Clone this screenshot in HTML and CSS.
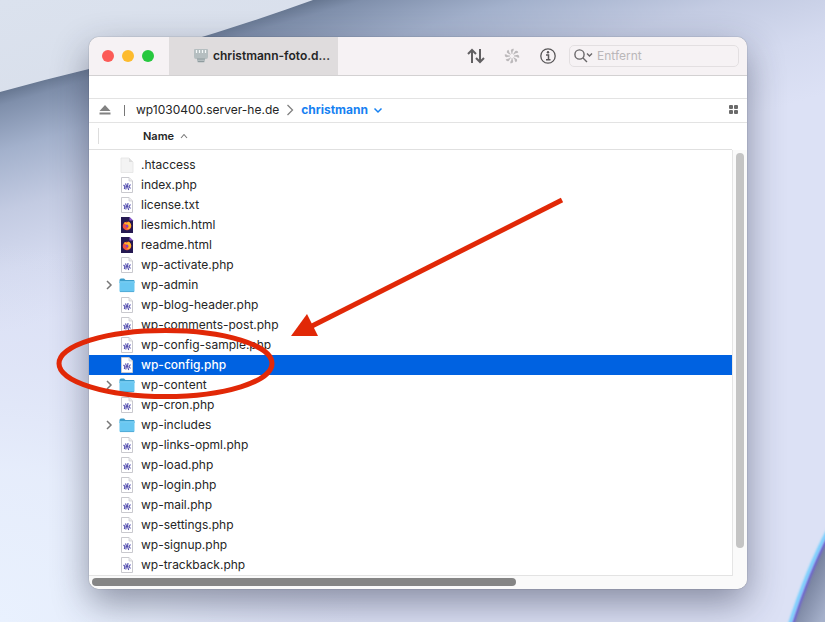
FILE: index.html
```html
<!DOCTYPE html>
<html lang="de">
<head>
<meta charset="utf-8">
<meta name="viewport" content="width=device-width, initial-scale=1">
<title>christmann-foto.de</title>
<link rel="stylesheet" href="styles.css">
</head>
<body>
<svg class="wallpaper" viewBox="0 0 825 622" preserveAspectRatio="none" aria-hidden="true">
  <defs>
    <linearGradient id="sky" gradientUnits="userSpaceOnUse" x1="100" y1="62" x2="165" y2="286">
      <stop offset="0" stop-color="#65758f"/><stop offset=".06" stop-color="#7f8fab"/><stop offset=".25" stop-color="#a3b1cc"/><stop offset=".5" stop-color="#c3cbe2"/><stop offset=".75" stop-color="#d4daef"/><stop offset="1" stop-color="#dce1f5"/>
    </linearGradient>
    <radialGradient id="floor" gradientUnits="userSpaceOnUse" cx="0" cy="622" r="380">
      <stop offset="0" stop-color="#e9f1fe"/><stop offset=".4" stop-color="#e7eefc" stop-opacity=".9"/><stop offset="1" stop-color="#dce1f5" stop-opacity="0"/>
    </radialGradient>
    <linearGradient id="sheet" x1="0" y1="0" x2="1" y2="1">
      <stop offset="0" stop-color="#dbe2ee"/><stop offset="1" stop-color="#d8deea"/>
    </linearGradient>
    <linearGradient id="fold" gradientUnits="userSpaceOnUse" x1="802" y1="590" x2="830" y2="604">
      <stop offset="0" stop-color="#75809c"/><stop offset="1" stop-color="#a5b0ca"/>
    </linearGradient>
    <filter id="soft"><feGaussianBlur stdDeviation="1"/></filter>
  </defs>
  <rect width="825" height="622" fill="url(#sky)"/>
  <rect width="825" height="622" fill="url(#floor)"/>
  <path d="M0 0H313Q205 39 89 69Q43 80 0 92Z" fill="url(#sheet)"/>
  <path d="M830 532Q809 572 792 626H830Z" fill="url(#fold)"/>
  <path d="M830 532Q809 572 792 626" fill="none" stroke="#7163d4" stroke-width="3" filter="url(#soft)"/>
  <path d="M828 530Q807 570 789 626" fill="none" stroke="#72cfff" stroke-width="3" filter="url(#soft)"/>
</svg>

<svg class="sprite" aria-hidden="true">
  <symbol id="php" viewBox="0 0 16 16">
    <path d="M2.500 .5H10L13.500 4V15.500H2.500Z" fill="#fff" stroke="#c9c9ce"/>
    <path d="M10 .5V4H13.500" fill="#eee" stroke="#c9c9ce" stroke-width=".7"/>
    <path d="M4.500 8L6 9.500L5.300 12M6.500 6.500L7.500 9L6.800 12.500M9 6L8.500 9.500L9.700 13M11.500 7.500L10 9.500L11.500 11.500" fill="none" stroke="#5550b0" stroke-width="1.100"/>
  </symbol>
  <symbol id="blank" viewBox="0 0 16 16">
    <path d="M2 1H10L14 5V15.500H2Z" fill="#f3f3f3" stroke="#e3e3e3" stroke-width=".8"/><path d="M10 1V5H14Z" fill="#ddd"/>
  </symbol>
  <symbol id="html" viewBox="0 0 16 16">
    <path d="M2 0H10.500L14 3.500V16H2Z" fill="#251951"/><path d="M10.500 0V3.500H14Z" fill="#9059d8"/>
    <circle cx="8" cy="9" r="4.300" fill="#f0503d"/><path d="M5 6.500L6 4.800L7.300 6.200L9.500 4.500Q12.800 6.500 12 10Q10.500 13 7 12Q9.700 11.500 9.500 9Z" fill="#ffb52e"/><path d="M6.500 8Q8.500 6.700 9.500 9Q9 10.700 7.300 10.300Z" fill="#8b42bd"/>
  </symbol>
  <symbol id="folder" viewBox="0 0 16 16">
    <path d="M.5 3Q.5 1.500 2 1.500H5L6.500 3H14.500Q15.500 3 15.500 4V6H.5Z" fill="#3b9cc9"/>
    <rect x=".5" y="4.500" width="15" height="10.500" rx="1" fill="#69c7f1"/><path d="M.5 4.800H15.500" stroke="#8bd8fa" stroke-width=".8"/><path d="M1 14.600H15" stroke="#4ca5cf" stroke-width=".8"/>
  </symbol>
  <symbol id="chevron" viewBox="0 0 8 10"><path d="M2 1L6 5L2 9" fill="none" stroke="#777" stroke-width="1.500"/></symbol>
</svg>

<main class="frame">
  <div class="window">
    <header class="titlebar">
      <div class="lights">
        <button class="light close" aria-label="Schließen"></button>
        <button class="light minimize" aria-label="Minimieren"></button>
        <button class="light expand" aria-label="Vergrößern"></button>
      </div>
      <button class="tab">
        <svg width="14" height="14" viewBox="0 0 14 14" aria-hidden="true"><path d="M0 1Q0 0 1 0H13Q14 0 14 1V8Q14 10 12 10H11V12Q11 13.500 9 13.500H5Q3 13.500 3 12V10H2Q0 10 0 8Z" fill="#b5bec0"/><path d="M2.500 1V4M5.500 1V4M8.500 1V4M11.500 1V4" stroke="#f4f8f8" stroke-width="1.200"/><path d="M3 10H11M4 12.500H10" stroke="#909c9f" stroke-width="1"/></svg>
        <span>christmann-foto.d...</span>
      </button>
      <div class="tools">
        <button class="tool" aria-label="Übertragungen"><svg width="18" height="16" viewBox="0 0 18 16"><path d="M5 15V2M1 6L5 2L9 6M13 1V14M9 10L13 14L17 10" fill="none" stroke="#626062" stroke-width="2"/></svg></button>
        <button class="tool" aria-label="Aktivität"><svg width="16" height="16" viewBox="0 0 16 16" fill="#bcb9bb"><g id="blade"><path d="M7.600 6L6.800 2.200Q7.500 .3 9.800 .8L9.500 2.500Q8.300 3 8.400 6Z"/><path d="M8.400 10L9.200 13.800Q8.500 15.700 6.200 15.200L6.500 13.500Q7.700 13 7.600 10Z"/></g><use href="#blade" transform="rotate(45 8 8)"/><use href="#blade" transform="rotate(90 8 8)"/><use href="#blade" transform="rotate(135 8 8)"/></svg></button>
        <button class="tool" aria-label="Information"><svg width="16" height="16" viewBox="0 0 16 16"><circle cx="8" cy="8" r="7.200" fill="none" stroke="#595759" stroke-width="1.300"/><circle cx="8" cy="4.300" r="1.200" fill="#595759"/><path d="M6 7H8.500V11.500M6 11.800H10.500" fill="none" stroke="#595759" stroke-width="1.500"/></svg></button>
      </div>
      <label class="search">
        <svg width="19" height="14" viewBox="0 0 19 14" aria-hidden="true"><circle cx="5.500" cy="5.500" r="4.600" fill="none" stroke="#686668" stroke-width="1.400"/><path d="M9 9L13 13M13 4.500L15.500 7L18 4.500" fill="none" stroke="#686668" stroke-width="1.400"/></svg>
        <input type="search" placeholder="Entfernt" aria-label="Entfernt">
      </label>
    </header>
    <div class="strip"></div>
    <nav class="path">
      <button class="plain" aria-label="Verbindung trennen"><svg width="12" height="10" viewBox="0 0 12 10"><path d="M6 0L11.500 6H.5ZM.5 7.500H11.500V9.500H.5Z" fill="#828282"/></svg></button>
      <span class="divider"></span>
      <a href="#" class="crumb">wp1030400.server-he.de</a>
      <svg class="next" width="8" height="12" viewBox="0 0 8 12" aria-hidden="true"><path d="M1.500 1L6.500 6L1.500 11" fill="none" stroke="#818181" stroke-width="1.300"/></svg>
      <a href="#" class="crumb current">christmann</a>
      <svg width="10" height="8" viewBox="0 0 10 8" aria-hidden="true"><path d="M1.500 2.500L5 6L8.500 2.500" fill="none" stroke="#1681f2" stroke-width="1.500"/></svg>
      <button class="plain grid" aria-label="Darstellung"><svg width="10" height="10" viewBox="0 0 10 10" fill="#6b6b6b"><rect width="4" height="4" rx="1"/><rect x="5" width="4" height="4" rx="1"/><rect y="5" width="4" height="4" rx="1"/><rect x="5" y="5" width="4" height="4" rx="1"/></svg></button>
    </nav>
    <div class="browser">
      <table class="files">
        <thead><tr><th scope="col"><span class="heading">Name <svg width="8" height="6" viewBox="0 0 8 6" aria-hidden="true"><path d="M1 5L4 1.500L7 5" fill="none" stroke="#777" stroke-width="1.100"/></svg></span></th></tr></thead>
        <tbody>
          <tr><td><div class="file"><svg class="icon"><use href="#blank"/></svg>.htaccess</div></td></tr>
          <tr><td><div class="file"><svg class="icon"><use href="#php"/></svg>index.php</div></td></tr>
          <tr><td><div class="file"><svg class="icon"><use href="#php"/></svg>license.txt</div></td></tr>
          <tr><td><div class="file"><svg class="icon"><use href="#html"/></svg>liesmich.html</div></td></tr>
          <tr><td><div class="file"><svg class="icon"><use href="#html"/></svg>readme.html</div></td></tr>
          <tr><td><div class="file"><svg class="icon"><use href="#php"/></svg>wp-activate.php</div></td></tr>
          <tr><td><div class="file"><button class="plain open" aria-label="wp-admin öffnen"><svg width="8" height="10"><use href="#chevron"/></svg></button><svg class="icon"><use href="#folder"/></svg>wp-admin</div></td></tr>
          <tr><td><div class="file"><svg class="icon"><use href="#php"/></svg>wp-blog-header.php</div></td></tr>
          <tr><td><div class="file"><svg class="icon"><use href="#php"/></svg>wp-comments-post.php</div></td></tr>
          <tr><td><div class="file"><svg class="icon"><use href="#php"/></svg>wp-config-sample.php</div></td></tr>
          <tr class="selected"><td><div class="file"><svg class="icon"><use href="#php"/></svg>wp-config.php</div></td></tr>
          <tr><td><div class="file"><button class="plain open" aria-label="wp-content öffnen"><svg width="8" height="10"><use href="#chevron"/></svg></button><svg class="icon"><use href="#folder"/></svg>wp-content</div></td></tr>
          <tr><td><div class="file"><svg class="icon"><use href="#php"/></svg>wp-cron.php</div></td></tr>
          <tr><td><div class="file"><button class="plain open" aria-label="wp-includes öffnen"><svg width="8" height="10"><use href="#chevron"/></svg></button><svg class="icon"><use href="#folder"/></svg>wp-includes</div></td></tr>
          <tr><td><div class="file"><svg class="icon"><use href="#php"/></svg>wp-links-opml.php</div></td></tr>
          <tr><td><div class="file"><svg class="icon"><use href="#php"/></svg>wp-load.php</div></td></tr>
          <tr><td><div class="file"><svg class="icon"><use href="#php"/></svg>wp-login.php</div></td></tr>
          <tr><td><div class="file"><svg class="icon"><use href="#php"/></svg>wp-mail.php</div></td></tr>
          <tr><td><div class="file"><svg class="icon"><use href="#php"/></svg>wp-settings.php</div></td></tr>
          <tr><td><div class="file"><svg class="icon"><use href="#php"/></svg>wp-signup.php</div></td></tr>
          <tr><td><div class="file"><svg class="icon"><use href="#php"/></svg>wp-trackback.php</div></td></tr>
        </tbody>
      </table>
      <div class="vscroll"><div class="vthumb"></div></div>
    </div>
    <div class="hscroll"><div class="hthumb"></div></div>
  </div>
  <svg class="annotation" width="520" height="210" viewBox="0 0 520 210" aria-hidden="true">
    <ellipse cx="115.500" cy="171.500" rx="106.500" ry="33" fill="none" stroke="#e12807" stroke-width="5"/>
    <path d="M512 8L260 135" stroke="#e12807" stroke-width="5"/>
    <path d="M241 144L257 122L268 144Z" fill="#e12807"/>
  </svg>
</main>
</body>
</html>
```
FILE: styles.css
```css
* { box-sizing: border-box; }

body {
  margin: 0;
  padding: 37px 78px 33px 89px;
  background: #dde2f6;
  color: #252525;
  font-family: Inter, "Liberation Sans", sans-serif;
  font-size: 12px;
  line-height: 20px;
}

button, input { font: inherit; color: inherit; }
button { padding: 0; border: 0; background: none; }
svg { display: block; flex: none; }
a { color: inherit; text-decoration: none; }

.wallpaper { position: absolute; inset: 0; width: 100%; height: 100%; z-index: -1; }
.sprite { position: absolute; width: 0; height: 0; }
.frame { position: relative; }

.window {
  overflow: hidden;
  border-radius: 10px;
  background: #fff;
  box-shadow: 0 0 1px rgba(0, 0, 0, .6), 0 14px 36px rgba(30, 35, 60, .45);
}

.titlebar {
  display: flex;
  align-items: center;
  height: 39px;
  padding-right: 8px;
  border-bottom: 1px solid #d3d1d2;
  background: #f6f2f4;
}
.lights { display: flex; gap: 8px; width: 80px; padding-left: 13px; }
.light { width: 12px; height: 12px; border-radius: 50%; }
.close { background: #fc5b57; }
.minimize { background: #fdbb2e; }
.expand { background: #27c83f; }
.tab {
  display: flex;
  align-items: center;
  justify-content: flex-end;
  gap: 5px;
  width: 169px;
  height: 100%;
  padding-right: 8px;
  background: #dfdcdd;
  font-weight: 600;
}
.tools { display: flex; gap: 18px; margin-left: auto; padding-right: 12px; }
.tool { display: grid; place-items: center; width: 18px; height: 18px; }
.search {
  display: flex;
  align-items: center;
  gap: 4px;
  width: 170px;
  height: 22px;
  padding-left: 4px;
  border: 1px solid #e3dfe1;
  border-radius: 5px;
}
.search input { flex: 1; min-width: 0; padding: 0; border: 0; outline: 0; background: none; }
.search input::placeholder { color: #bab7b9; opacity: 1; }

.strip { height: 23px; border-bottom: 1px solid #e3e3e3; }
.path {
  display: flex;
  align-items: center;
  height: 24px;
  padding: 0 8px 1px 10px;
  border-bottom: 1px solid #e3e3e3;
}
.divider { width: 1px; height: 11px; margin: 0 11px 0 13px; background: #777; }
.next { margin: 0 7px; }
.current { margin-right: 5px; color: #1681f2; font-weight: 700; }
.grid { margin-left: auto; }

.browser { display: flex; }
.files { flex: 1; border-collapse: separate; border-spacing: 0; border-bottom: 1px solid #e3e3e3; }
.files th {
  height: 27px;
  padding: 0 0 0 9px;
  border-bottom: 1px solid #e0e0e0;
  font-size: 11px;
  font-weight: 600;
  text-align: left;
}
.heading { display: flex; align-items: center; gap: 6px; height: 16px; padding-left: 44px; border-left: 1px solid #ddd; }
.files tbody::before { content: ""; display: block; height: 5px; }
.files td { padding: 0; }
.file { display: flex; align-items: center; gap: 6px; height: 20px; padding-left: 30px; }
.icon { width: 16px; height: 16px; }
.open { width: 8px; margin-left: -14px; }
.selected { background: #0062e1; color: #fff; font-weight: 500; }

.vscroll { width: 15px; margin-top: 27px; padding: 3px; border-left: 1px solid #e5e5e5; background: #fafafa; }
.vthumb { width: 8px; height: 94%; border-radius: 4px; background: #c4c4c4; }
.hscroll { height: 13px; padding: 2px 3px; background: #fafafa; }
.hthumb { width: 65%; height: 8px; border-radius: 4px; background: #858585; }

.annotation { position: absolute; left: -39px; top: 155px; pointer-events: none; }
```
